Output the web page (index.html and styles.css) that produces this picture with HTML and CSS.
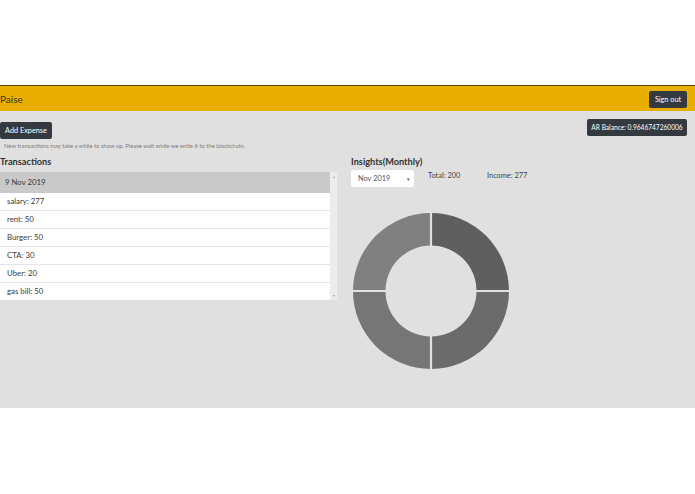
FILE: index.html
```html
<!DOCTYPE html>
<html>
<head>
<meta charset="utf-8">
<title>Paise</title>
<link rel="stylesheet" href="styles.css">
</head>
<body>
<div class="top-space"></div>
<nav class="navbar">
  <span class="brand">Paise</span>
  <button class="btn btn-nav">Sign out</button>
</nav>
<main class="main">
  <div class="toprow">
    <div class="actions">
      <button class="btn btn-add">Add Expense</button>
      <p class="hint">New transactions may take a while to show up. Please wait while we write it to the blockchain.</p>
    </div>
    <button class="btn btn-balance">AR Balance: 0.9646747260006</button>
  </div>
  <div class="columns">
    <section class="tx">
      <h5 class="title">Transactions</h5>
      <div class="listbox">
        <ul class="list">
          <li class="item item-head">9 Nov 2019</li>
          <li class="item">salary: 277</li>
          <li class="item">rent: 50</li>
          <li class="item">Burger: 50</li>
          <li class="item">CTA: 30</li>
          <li class="item">Uber: 20</li>
          <li class="item">gas bill: 50</li>
        </ul>
        <div class="scrollbar"><span class="arrow">&#9652;</span><span class="arrow">&#9662;</span></div>
      </div>
    </section>
    <section class="insights">
      <h5 class="title">Insights(Monthly)</h5>
      <div class="controls">
        <div class="select"><span>Nov 2019</span><span class="caret">&#9662;</span></div>
        <span class="stat stat-total">Total: 200</span>
        <span class="stat">Income: 277</span>
      </div>
      <svg class="donut" width="158" height="158" viewBox="0 0 158 158">
        <path d="M1,79 A78,78 0 0 1 79,1 L79,33.5 A45.5,45.5 0 0 0 33.5,79 Z" fill="#808080"/>
        <path d="M79,1 A78,78 0 0 1 157,79 L124.5,79 A45.5,45.5 0 0 0 79,33.5 Z" fill="#5f5f5f"/>
        <path d="M157,79 A78,78 0 0 1 79,157 L79,124.5 A45.5,45.5 0 0 0 124.5,79 Z" fill="#6b6b6b"/>
        <path d="M79,157 A78,78 0 0 1 1,79 L33.5,79 A45.5,45.5 0 0 0 79,124.5 Z" fill="#767676"/>
        <line x1="79" y1="0" x2="79" y2="158" stroke="#e0e0e0" stroke-width="2.2"/>
        <line x1="0" y1="79" x2="158" y2="79" stroke="#e0e0e0" stroke-width="2.2"/>
      </svg>
    </section>
  </div>
</main>
</body>
</html>
```
FILE: styles.css
```css
* { box-sizing: border-box; }
body {
  margin: 0;
  background: #ffffff;
  font-family: "Lato", "Open Sans", sans-serif;
  color: #212529;
}
.top-space { height: 85px; }
.navbar {
  height: 26px;
  border-top: 1px solid #5c4a08;
  background: #e8ae00;
  display: flex;
  align-items: center;
  justify-content: space-between;
  padding: 0 8px 0 0;
}
.brand {
  font-size: 10px;
  color: #3a3320;
  margin-top: 1px;
}
.btn {
  display: block;
  font-family: inherit;
  background: #343a40;
  color: #ffffff;
  border: none;
  border-radius: 2px;
  font-size: 7.3px;
  line-height: 17px;
  height: 17px;
  padding: 0;
  white-space: nowrap;
  text-align: center;
  cursor: pointer;
}
.btn-nav { margin-top: 1px; width: 38px; }
.main {
  background: #e0e0e0;
  height: 297px;
  padding: 0 8px 0 0;
}
.toprow {
  display: flex;
  justify-content: space-between;
  align-items: flex-start;
}
.actions { padding-top: 11px; }
.btn-add { width: 52px; }
.btn-balance { margin-top: 8px; width: 100px; font-size: 6.6px; }
.hint {
  margin: 3px 0 0 4px;
  font-size: 5.85px;
  line-height: 8px;
  color: #7d7d7d;
}
.columns {
  display: grid;
  grid-template-columns: 337px 1fr;
  column-gap: 14px;
  margin-top: 5px;
}
.title {
  margin: 0;
  font-size: 9.2px;
  font-weight: 700;
  line-height: 14px;
  color: #333333;
}
.listbox {
  display: flex;
  margin-top: 3px;
  height: 128px;
}
.list {
  list-style: none;
  margin: 0;
  padding: 0;
  width: 330px;
  background: #ffffff;
}
.item {
  height: 18px;
  line-height: 17px;
  padding-left: 7px;
  font-size: 7.8px;
  color: #3a3a3a;
  border-bottom: 1px solid #e4e4e4;
}
.item:last-child { border-bottom: none; height: 17px; }
.item-head {
  height: 21px;
  line-height: 21px;
  background: #c9c9c9;
  border-bottom: none;
  color: #3a3a3a;
  padding-left: 5px;
}
.scrollbar {
  width: 7px;
  background: #ececec;
  display: flex;
  flex-direction: column;
  justify-content: space-between;
  align-items: center;
  padding: 2px 0;
}
.arrow { font-size: 4px; color: #a8a8a8; line-height: 5px; }
.controls {
  display: flex;
  align-items: flex-start;
  margin-top: 1px;
}
.select {
  width: 63px;
  height: 17px;
  background: #ffffff;
  border-radius: 2px;
  display: flex;
  justify-content: space-between;
  align-items: center;
  padding: 0 4px 0 7px;
  font-size: 7.4px;
  color: #555555;
}
.caret { font-size: 5px; color: #555; }
.stat {
  font-size: 7.4px;
  color: #444444;
  margin-top: 1px;
}
.stat-total { margin-left: 14px; width: 59px; }
.donut {
  display: block;
  margin: 25px 0 0 1px;
}
```
